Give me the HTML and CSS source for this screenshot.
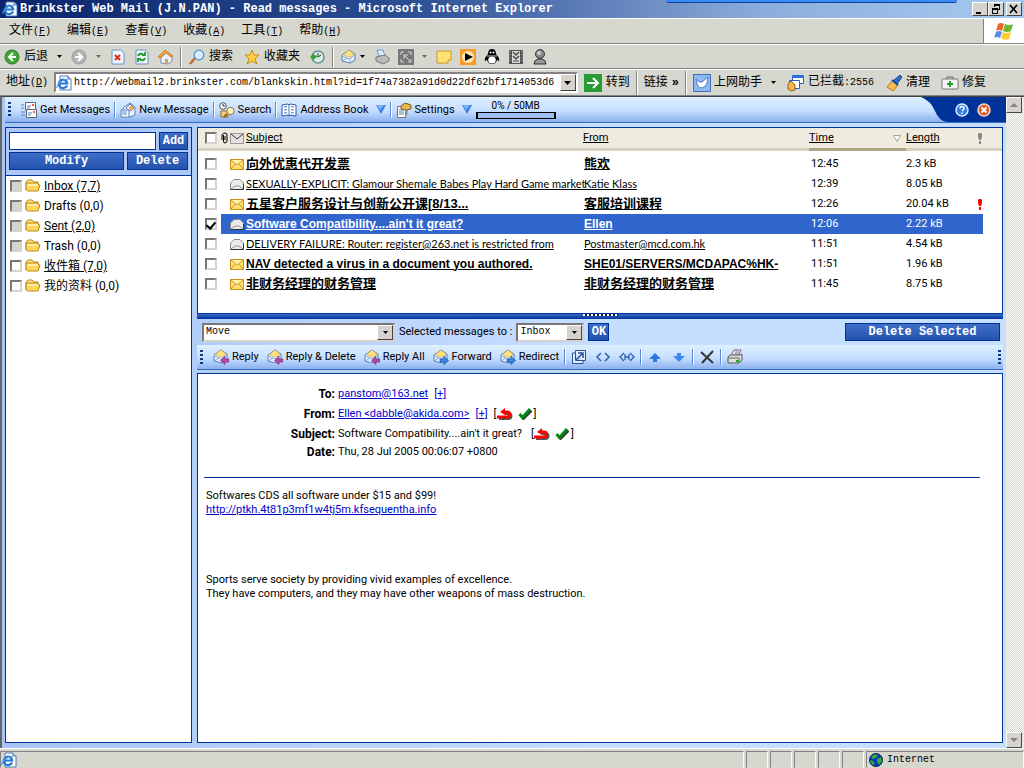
FILE: index.html
```html
<!DOCTYPE html>
<html lang="zh-CN">
<head>
    <meta charset="UTF-8">
    <meta name="viewport" content="width=device-width, initial-scale=1.0">
    <title>Brinkster Web Mail (J.N.PAN) - Read messages</title>
    <link rel="stylesheet" href="styles.css">
</head>
<body>
    <!-- shared icons -->
    <svg class="sprite" aria-hidden="true">
        <symbol id="i-ie" viewBox="0 0 16 16">
            <path d="M4 1h8l3 3v11H4z" fill="#fff" stroke="#5578b8"/>
            <path d="M12 1v3h3" fill="#cde" stroke="#5578b8"/>
            <path d="M11 10.500a4.200 4.200 0 1 1 .3-2H3.500" fill="none" stroke="#2277d0" stroke-width="2.200"/>
            <path d="M1 13C0 9 7 4 12 4" fill="none" stroke="#4c9be8" stroke-width="1.200"/>
        </symbol>
        <symbol id="i-caret" viewBox="0 0 5 3"><path d="M0 0h5L2.500 3z"/></symbol>
        <symbol id="i-tri" viewBox="0 0 10 9"><path d="M0 0h10L5 9z" fill="#3c7ee8"/><path d="M1 0h7L4 5z" fill="#7eb2f8"/></symbol>
        <symbol id="i-mail" viewBox="0 0 16 16">
            <path d="M1 6l7-5 6 4v6l-5 3-8-2z" fill="#e8f2ff" stroke="#5a80bd"/>
            <path d="M3 5l5-4 5 4-3 3-6-1z" fill="#ffe27a" stroke="#c9a23c" stroke-width=".6"/>
            <path d="M1 7l7 3 6-4M1 12l5-3m3 5V9" fill="none" stroke="#7a9cd0" stroke-width=".8"/>
        </symbol>
        <symbol id="i-reply" viewBox="0 0 16 16">
            <use href="#i-mail"/>
            <path d="M16 10h-4V7.500L7.500 11.500l4.500 4V13h4z" fill="#b04ca8" stroke="#7c2a80" stroke-width=".7"/>
        </symbol>
        <symbol id="i-forward" viewBox="0 0 16 16">
            <use href="#i-mail"/>
            <path d="M7 10h4V7.500l4.500 4-4.500 4V13H7z" fill="#3c86e8" stroke="#1b4fa0" stroke-width=".7"/>
        </symbol>
        <symbol id="i-folder" viewBox="0 0 16 14">
            <path d="M1 11V3l2-2h4l2 2h4v3" fill="#ffe48a" stroke="#b98a1a"/>
            <path d="M1 4h12v2h2l-2 6H3l-2-1z" fill="#ffd75a" stroke="#b98a1a"/>
            <path d="M3 6h10" stroke="#fff6c8" stroke-width="1.500"/>
        </symbol>
        <symbol id="i-closed" viewBox="0 0 14 11">
            <path d="M.5.5h13v10H.5z" fill="#ffdf70" stroke="#c98f1c"/>
            <path d="M1 1l6 5 6-5M1 10l4-5m8 5L9 5" fill="none" stroke="#d09a2c"/>
            <path d="M2 1h10L7 5z" fill="#fff2ae"/>
        </symbol>
        <symbol id="i-open" viewBox="0 0 14 11">
            <path d="M.5 10.500V4L4 .5h6L13.500 4v6.500z" fill="#eceaec" stroke="#888"/>
            <path d="M1 10l4-3h4l4 3" fill="none" stroke="#999"/>
            <path d="M.5 10.500h13V5" fill="none" stroke="#333"/>
        </symbol>
        <symbol id="i-spam" viewBox="0 0 16 12">
            <path d="M1 9.500h9c4 0 4-5 0-5H7" fill="none" stroke="#555" stroke-width="3" transform="translate(1 1)"/>
            <path d="M0 9h10c3.500 0 3.500-5 0-5H6" fill="none" stroke="#f00" stroke-width="3"/>
            <path d="M3 4l5-4v7z" fill="#f00"/>
        </symbol>
        <symbol id="i-ok" viewBox="0 0 14 12">
            <path d="M2 7l3 3 8-8" fill="none" stroke="#333" stroke-width="2.500" transform="translate(.6 .6)"/>
            <path d="M1.500 6l3 3.500L12 1" fill="none" stroke="#008a10" stroke-width="2.800"/>
        </symbol>
        <symbol id="i-printer" viewBox="0 0 16 16">
            <path d="M4 7l3-6h7l-3 6z" fill="#fff" stroke="#668"/>
            <path d="M1 8l2-2h10l2-1v6l-3 3H1z" fill="#ddd" stroke="#555"/>
            <path d="M1 9h11v5M8 3h4M7 5h4" fill="none" stroke="#666"/>
            <path d="M9 11h3v2H9z" fill="#2a2"/>
        </symbol>
    </svg>

    <header class="titlebar">
        <svg class="ico"><use href="#i-ie"/></svg>
        <h1>Brinkster Web Mail (J.N.PAN) - Read messages - Microsoft Internet Explorer</h1>
        <span class="behind"></span>
        <div class="win-buttons">
            <button type="button" aria-label="Minimize"><svg viewBox="0 0 12 10"><path d="M2 8h5v2H2z"/></svg></button>
            <button type="button" aria-label="Restore"><svg viewBox="0 0 12 10"><path d="M4 0h6v6H8V5h1V2H5v1H4zM2 4h6v6H2zM3 6v3h4V6z" fill-rule="evenodd"/></svg></button>
            <button type="button" class="close" aria-label="Close"><svg viewBox="0 0 12 10"><path d="M2 1l7 8M9 1L2 9" stroke="#000" stroke-width="1.700"/></svg></button>
        </div>
    </header>

    <nav class="menubar">
        <button type="button">文件<small>(<u>F</u>)</small></button>
        <button type="button">编辑<small>(<u>E</u>)</small></button>
        <button type="button">查看<small>(<u>V</u>)</small></button>
        <button type="button">收藏<small>(<u>A</u>)</small></button>
        <button type="button">工具<small>(<u>T</u>)</small></button>
        <button type="button">帮助<small>(<u>H</u>)</small></button>
        <span class="flag">
            <svg viewBox="0 0 20 18">
                <path d="M4 2q3-2 6 0L8 9q-3-2-6 0z" fill="#f0642c"/>
                <path d="M11 2q4 2 8 0l-2 7q-4 2-8 0z" fill="#6cb82e"/>
                <path d="M2 10q3-2 6 0l-2 6q-3-2-6 0z" fill="#4f8fe8"/>
                <path d="M9 10q4 2 8 0l-2 7q-4 2-8-1z" fill="#ffc928"/>
            </svg>
        </span>
    </nav>

    <div class="ie-tools">
        <button type="button"><svg class="ico" viewBox="0 0 16 16"><circle cx="8" cy="8" r="7" fill="#3fa535" stroke="#277a22"/><path d="M12 8H5m4-4L5 8l4 4" fill="none" stroke="#fff" stroke-width="2"/></svg>后退</button>
        <svg class="caret"><use href="#i-caret"/></svg>
        <button type="button" aria-label="前进"><svg class="ico" viewBox="0 0 16 16"><circle cx="8" cy="8" r="7" fill="#b4b4b4" stroke="#999"/><path d="M4 8h7M7 4l4 4-4 4" fill="none" stroke="#fff" stroke-width="2"/></svg></button>
        <svg class="caret dim"><use href="#i-caret"/></svg>
        <button type="button" class="wide" aria-label="停止"><svg class="ico" viewBox="0 0 16 16"><path d="M2 1h9l3 3v11H2z" fill="#eef5ff" stroke="#6c93cf"/><path d="M5 6l5 5m0-5l-5 5" stroke="#e02a18" stroke-width="2"/></svg></button>
        <button type="button" class="wide" aria-label="刷新"><svg class="ico" viewBox="0 0 16 16"><path d="M2 1h9l3 3v11H2z" fill="#eef5ff" stroke="#6c93cf"/><path d="M4 7q1-3 5-2m2-2v3H8m3 3q-1 3-5 2m-2 2v-3h3" fill="none" stroke="#1c9a2c" stroke-width="1.800"/></svg></button>
        <button type="button" class="wide" aria-label="主页"><svg class="ico" viewBox="0 0 16 16"><path d="M3 8v6l7 1 4-3V7l-5-4z" fill="#e9f0fb" stroke="#7790b5"/><path d="M0 8l7-7 8 6-2 1-5-4-6 5z" fill="#f2a33a" stroke="#b86c1a" stroke-width=".7"/><path d="M7 10h3v5H7z" fill="#d99b58"/></svg></button>
        <i class="sep"></i>
        <button type="button"><svg class="ico" viewBox="0 0 16 16"><path d="M1 15l5-6" stroke="#b8733c" stroke-width="2.500"/><circle cx="10" cy="6" r="4.800" fill="#d6efff" stroke="#5a92c8" stroke-width="1.300"/></svg><span>搜索</span></button>
        <button type="button" class="fav"><svg class="ico" viewBox="0 0 16 16"><path d="M8 1l2 5h5l-4 4 2 5-5-3-5 3 2-5-4-4h5z" fill="#ffd044" stroke="#c78e14"/></svg><span>收藏夹</span></button>
        <button type="button" aria-label="历史"><svg class="ico" viewBox="0 0 16 16"><circle cx="9" cy="8" r="6" fill="#d8ece8" stroke="#6a8f96" stroke-width="1.500"/><path d="M9 4v4l3-2" fill="none" stroke="#333"/><path d="M1 8l4-4v2q3 0 4 2-3 0-4 3z" fill="#33a52c"/></svg></button>
        <i class="sep"></i>
        <button type="button" aria-label="邮件"><svg class="ico"><use href="#i-mail"/></svg></button>
        <svg class="caret near"><use href="#i-caret"/></svg>
        <button type="button" class="wide" aria-label="打印"><svg class="ico" viewBox="0 0 16 16"><path d="M3 1h6l2 6H5z" fill="#dcecff" stroke="#6b97d2"/><path d="M2 8l9-2 4 3v3l-6 3-7-3z" fill="#bbb" stroke="#777"/></svg></button>
        <button type="button" class="wide" aria-label="全屏"><svg class="ico" viewBox="0 0 16 16"><path d="M0 0h16v16H0z" fill="#777"/><path d="M3 6V3h3M13 6V3h-3M3 10v3h3m7-3v3h-3M6 10V6h4M6 6l6 6" fill="none" stroke="#ddd"/></svg></button>
        <svg class="caret dim"><use href="#i-caret"/></svg>
        <button type="button" class="wide" aria-label="便笺"><svg class="ico" viewBox="0 0 16 16"><path d="M1 2h14v9l-3 3H1z" fill="#ffe071" stroke="#c49a28"/><path d="M15 11h-3v3" fill="#fff3b5" stroke="#c49a28"/></svg></button>
        <button type="button" class="wide" aria-label="媒体"><svg class="ico" viewBox="0 0 16 16"><path d="M0 0h16v16H0z" fill="#f79b2c"/><circle cx="8" cy="8" r="6" fill="#ffe9b8"/><path d="M5 4l8 4-8 4z"/></svg></button>
        <button type="button" class="wide" aria-label="QQ"><svg class="ico" viewBox="0 0 16 16"><path d="M4 5q0-5 4-5t4 5q4 4 3 7l-2-1q-1 4-5 4t-5-4l-2 1q-1-3 3-7z"/><ellipse cx="8" cy="11" rx="3.800" ry="3.500" fill="#fff"/><circle cx="6.500" cy="3.500" r="1" fill="#fff"/><circle cx="9.500" cy="3.500" r="1" fill="#fff"/><path d="M3 7h10" stroke="#888" stroke-width="1.500"/></svg></button>
        <button type="button" class="wide" aria-label="下载"><svg class="ico" viewBox="0 0 16 16"><path d="M1 1h14v14H1z" fill="#555"/><path d="M4 2h8v12H4z" fill="#ddd"/><path d="M2 2v12M14 2v12" stroke="#bbb" stroke-dasharray="1 2"/><path d="M5 3l3 3 3-3M5 7l3 3 3-3" fill="none" stroke="#444" stroke-width="1.500"/><path d="M5 12h6" stroke="#444"/></svg></button>
        <button type="button" class="wide" aria-label="联系人"><svg class="ico" viewBox="0 0 16 16"><circle cx="8" cy="5" r="4.500" fill="#888" stroke="#333"/><path d="M2 15q0-4 4-5h4q4 1 4 5z" fill="#999" stroke="#333"/><circle cx="7" cy="4" r="2" fill="#ccc"/></svg></button>
    </div>

    <form class="address">
        <label for="url">地址<small>(<u>D</u>)</small></label>
        <div class="url-box">
            <svg class="ico"><use href="#i-ie"/></svg>
            <input type="text" id="url" value="http://webmail2.brinkster.com/blankskin.html?id=1f74a7382a91d0d22df62bf1714053d6">
            <button type="button" class="drop" aria-label="展开"><svg viewBox="0 0 7 4"><path d="M0 0h7L3.500 4z"/></svg></button>
        </div>
        <button type="button" class="go"><svg viewBox="0 0 18 18"><path d="M0 0h18v18H0z" fill="#279b35"/><path d="M3 9h10M9 4l5 5-5 5" fill="none" stroke="#fff" stroke-width="2"/></svg>转到</button>
        <i class="sep"></i>
        <a href="#" class="links">链接 <b>»</b></a>
        <i class="sep"></i>
        <button type="button" class="helper"><svg viewBox="0 0 18 18"><path d="M.5.5h17v17H.5z" fill="#8eb8f0" stroke="#3d70bd"/><path d="M3 5q3 4 6 3l6-5q0 9-6 11-5 0-6-9z" fill="#fff" stroke="#4a7ac2"/></svg>上网助手<svg class="caret"><use href="#i-caret"/></svg></button>
        <button type="button" class="helper"><svg viewBox="0 0 18 18"><path d="M5.500 1.500h11v8h-11z" fill="#fff" stroke="#2a5fc4"/><path d="M5 1h12v3H5z" fill="#2a6fe0"/><path d="M2.500 6.500h10v8h-10z" fill="#fff" stroke="#2a5fc4"/><path d="M1 10l3-3 4 4v5l-4 1-3-2z" fill="#f3b555" stroke="#9b5d18"/></svg><span>已拦截<small>:2556</small></span></button>
        <button type="button" class="helper"><svg viewBox="0 0 18 18"><path d="M15 1l2 2-5 7-4-3z" fill="#2d6fd0" stroke="#174690"/><path d="M8 6l5 5-5 6-6-4z" fill="#f4bd54" stroke="#b7761e"/><path d="M7 6l6 5" stroke="#174690" stroke-width="2"/></svg>清理</button>
        <button type="button" class="helper"><svg viewBox="0 0 18 18"><path d="M6 5V3h6v2" fill="none" stroke="#666"/><rect x="1" y="5" width="16" height="10" rx="1" fill="#f4f4f4" stroke="#777"/><path d="M9 7v6M6 10h6" stroke="#22a12c" stroke-width="2"/></svg>修复</button>
    </form>

    <div class="viewport">
        <div class="page">
            <nav class="mail-tools">
                <i class="dots"></i>
                <a href="#"><svg class="ico" viewBox="0 0 16 16"><path d="M4.500.5h10v8h-10z" fill="#fff" stroke="#667"/><path d="M6 4h4M6 6h3M0 3h3M0 6h3" stroke="#58c"/><path d="M11 2h2v2h-2z" fill="#e64"/><path d="M5.500 7.500h10v8h-10z" fill="#fff" stroke="#667"/><path d="M7 11h4m-4 2h3M0 10h4M0 13h4" stroke="#58c"/><path d="M12 9h2v2h-2z" fill="#e64"/></svg>Get Messages</a>
                <i class="sep"></i>
                <a href="#"><svg class="ico" viewBox="0 0 16 16"><path d="M3 6l7-5 5 4v8l-5 2-7-2z" fill="#e8f2ff" stroke="#5a80bd"/><path d="M6 6l4-4 4 4-4 3z" fill="#fff" stroke="#5a80bd"/><circle cx="11" cy="6" r="2" fill="#f2a33a"/><path d="M1 8h8v7H1z" fill="#fff" stroke="#5a80bd"/><path d="M2 10h5m-5 2h5" stroke="#58c"/></svg>New Message</a>
                <i class="sep"></i>
                <a href="#"><svg class="ico" viewBox="0 0 16 16"><circle cx="4" cy="4" r="3.300" fill="#fff" stroke="#555"/><path d="M4 2v2h2" fill="none" stroke="#333"/><path d="M2 9h7v6H2z" fill="#f6cf70" stroke="#96701e"/><circle cx="11.500" cy="9" r="3.700" fill="#fff3c4" stroke="#8a7440"/><path d="M8 12l-3 3" stroke="#8a6020" stroke-width="2"/></svg>Search</a>
                <i class="sep"></i>
                <a href="#"><svg class="ico" viewBox="0 0 16 16"><path d="M1 3l6-1 1 1 1-1 6 1v11l-6-1-1 1-1-1-6 1z" fill="#fff" stroke="#2f5da8"/><path d="M8 3v10M3 5l3-.5M3 8l3-.5M3 11l3-.5M10 4.500l3 .5m-3 2.500l3 .5m-3 2.500l3 .5" stroke="#4b7cc8"/></svg>Address Book<svg class="tri"><use href="#i-tri"/></svg></a>
                <i class="sep"></i>
                <a href="#"><svg class="ico" viewBox="0 0 16 16"><path d="M1.500 4.500h8v11h-8z" fill="#fff" stroke="#777"/><path d="M3 8h5m-5 2h5m-5 2h5" stroke="#58a"/><path d="M5 4l4-3 6 2v4l-5 1-5-1z" fill="#e8b64a" stroke="#7e5a16"/><path d="M9 7h3l-1 6H9z" fill="#888"/></svg>Settings<svg class="tri"><use href="#i-tri"/></svg></a>
                <div class="quota">0% / 50MB<meter min="0" max="50" value="0" aria-label="Quota used"></meter></div>
                <div class="corner">
                    <svg class="curve" viewBox="0 0 26 25" preserveAspectRatio="none"><path d="M0 0h26v25Q18 24 14 14T0 0z" fill="#039"/></svg>
                    <a href="#" aria-label="Help"><svg viewBox="0 0 14 14"><circle cx="7" cy="7" r="6" fill="#3a7de0" stroke="#dcebff" stroke-width="1.500"/><path d="M5 5.500q0-2 2-2t2 1.800Q9 6.500 7 8m0 1.500V11" fill="none" stroke="#fff" stroke-width="1.500"/></svg></a>
                    <a href="#" aria-label="Log out"><svg viewBox="0 0 14 14"><circle cx="7" cy="7" r="6" fill="#dd5a2c" stroke="#ffd8c4" stroke-width="1.500"/><path d="M4.500 4.500l5 5m0-5l-5 5" stroke="#fff" stroke-width="1.800"/></svg></a>
                </div>
            </nav>

            <div class="columns">
                <aside class="folders">
                    <form class="folder-form">
                        <input type="text" aria-label="Folder name">
                        <button type="button" class="btn add">Add</button>
                        <button type="button" class="btn modify">Modify</button>
                        <button type="button" class="btn delete">Delete</button>
                    </form>
                    <ul>
                        <li><input type="checkbox" disabled aria-label="Inbox"><svg><use href="#i-folder"/></svg><a href="#">Inbox (7,7)</a></li>
                        <li><input type="checkbox" disabled aria-label="Drafts"><svg><use href="#i-folder"/></svg><a href="#" class="plain">Drafts (0,0)</a></li>
                        <li><input type="checkbox" disabled aria-label="Sent"><svg><use href="#i-folder"/></svg><a href="#">Sent (2,0)</a></li>
                        <li><input type="checkbox" disabled aria-label="Trash"><svg><use href="#i-folder"/></svg><a href="#" class="plain">Trash (0,0)</a></li>
                        <li><input type="checkbox" aria-label="收件箱"><svg><use href="#i-folder"/></svg><a href="#">收件箱 (7,0)</a></li>
                        <li><input type="checkbox" aria-label="我的资料"><svg><use href="#i-folder"/></svg><a href="#" class="plain">我的资料 (0,0)</a></li>
                    </ul>
                </aside>

                <main class="content">
                    <section class="list">
                        <table>
                            <colgroup>
                                <col class="c-check"><col class="c-icon"><col><col class="c-from"><col class="c-time"><col class="c-length"><col class="c-flag"><col class="c-end">
                            </colgroup>
                            <thead>
                                <tr>
                                    <th><input type="checkbox" aria-label="Select all"></th>
                                    <th><span class="head-icons">
                                        <svg class="clip" viewBox="0 0 8 12"><path d="M2.500 3v6q0 2 1.500 2t2-2V3q0-2-2-2T1 3v5M4 4v4" fill="none" stroke="#000"/></svg>
                                        <svg class="env" viewBox="0 0 14 11"><path d="M.5.5h13v10H.5z" fill="#e4e0e0" stroke="#999"/><path d="M1 1l6 5 6-5" fill="none" stroke="#333"/></svg>
                                    </span></th>
                                    <th><a href="#">Subject</a></th>
                                    <th><a href="#">From</a></th>
                                    <th class="sorted"><span><a href="#">Time</a><svg viewBox="0 0 8 7"><path d="M.5.5h7L4 6.500z" fill="#fff" stroke="#aca899"/></svg></span></th>
                                    <th><a href="#">Length</a></th>
                                    <th><svg class="bang" viewBox="0 0 4 11"><path d="M0 1l1-1h2l1 1v3L3 7H1L0 4zM1 8h2v3H1z" fill="#888"/></svg></th>
                                    <th></th>
                                </tr>
                            </thead>
                            <tbody>
                                <tr class="unread cjk"><td><input type="checkbox" aria-label="Select message"></td><td><svg class="env"><use href="#i-closed"/></svg></td><td><a href="#">向外优惠代开发票</a></td><td><a href="#">熊欢</a></td><td>12:45</td><td>2.3 kB</td><td></td><td class="end"></td></tr>
                                <tr class="read"><td><input type="checkbox" aria-label="Select message"></td><td><svg class="env"><use href="#i-open"/></svg></td><td><a href="#">SEXUALLY-EXPLICIT: Glamour Shemale Babes Play Hard Game market</a></td><td><a href="#">Katie Klass</a></td><td>12:39</td><td>8.05 kB</td><td></td><td class="end"></td></tr>
                                <tr class="unread cjk"><td><input type="checkbox" aria-label="Select message"></td><td><svg class="env"><use href="#i-closed"/></svg></td><td><a href="#">五星客户服务设计与创新公开课[8/13...</a></td><td><a href="#">客服培训课程</a></td><td>12:26</td><td>20.04 kB</td><td><svg class="bang" viewBox="0 0 4 11"><path d="M0 1l1-1h2l1 1v3L3 7H1L0 4zM1 8h2v3H1z" fill="#f00"/></svg></td><td class="end"></td></tr>
                                <tr class="unread selected"><td><input type="checkbox" checked aria-label="Select message"></td><td><svg class="env"><use href="#i-open"/></svg></td><td><a href="#">Software Compatibility....ain't it great?</a></td><td><a href="#">Ellen</a></td><td>12:06</td><td>2.22 kB</td><td></td><td class="end"></td></tr>
                                <tr class="read"><td><input type="checkbox" aria-label="Select message"></td><td><svg class="env"><use href="#i-open"/></svg></td><td><a href="#">DELIVERY FAILURE: Router: register@263.net is restricted from</a></td><td><a href="#">Postmaster@mcd.com.hk</a></td><td>11:51</td><td>4.54 kB</td><td></td><td class="end"></td></tr>
                                <tr class="unread"><td><input type="checkbox" aria-label="Select message"></td><td><svg class="env"><use href="#i-closed"/></svg></td><td><a href="#">NAV detected a virus in a document you authored.</a></td><td><a href="#">SHE01/SERVERS/MCDAPAC%HK-</a></td><td>11:51</td><td>1.96 kB</td><td></td><td class="end"></td></tr>
                                <tr class="unread cjk"><td><input type="checkbox" aria-label="Select message"></td><td><svg class="env"><use href="#i-closed"/></svg></td><td><a href="#">非财务经理的财务管理</a></td><td><a href="#">非财务经理的财务管理</a></td><td>11:45</td><td>8.75 kB</td><td></td><td class="end"></td></tr>
                            </tbody>
                        </table>
                    </section>

                    <div class="splitter"><i></i></div>

                    <form class="actions">
                        <span class="select wide"><select id="action" aria-label="Action"><option>Move</option><option>Copy</option></select><i><svg><use href="#i-caret"/></svg></i></span>
                        <label for="target">Selected messages to :</label>
                        <span class="select"><select id="target"><option>Inbox</option><option>Drafts</option></select><i><svg><use href="#i-caret"/></svg></i></span>
                        <button type="button" class="btn ok">OK</button>
                        <button type="button" class="btn delete-selected">Delete Selected</button>
                    </form>

                    <nav class="mail-tools message-tools">
                        <i class="dots"></i>
                        <a href="#"><svg class="ico"><use href="#i-reply"/></svg>Reply</a>
                        <a href="#"><svg class="ico"><use href="#i-reply"/></svg>Reply &amp; Delete</a>
                        <a href="#"><svg class="ico"><use href="#i-reply"/></svg>Reply All</a>
                        <a href="#"><svg class="ico"><use href="#i-forward"/></svg>Forward</a>
                        <a href="#"><svg class="ico"><use href="#i-forward"/></svg>Redirect</a>
                        <i class="sep"></i>
                        <a href="#" aria-label="Open in new window"><svg class="ico" viewBox="0 0 16 16"><path d="M4.500 1.500h10v10h-10zM4 4H1.500v10.500H12V12" fill="#e6f1ff" stroke="#27509a"/><path d="M5 11l7-7M7 4h5v5" fill="none" stroke="#27509a" stroke-width="1.500"/></svg></a>
                        <a href="#" aria-label="Source"><svg class="ico" viewBox="0 0 16 16"><path d="M6 4L2 8l4 4m4-8l4 4-4 4" fill="none" stroke="#2a5cb0" stroke-width="1.500"/></svg></a>
                        <a href="#" aria-label="Headers"><svg class="ico" viewBox="0 0 16 16"><path d="M5 4L1 8l4 4m6-8l4 4-4 4M6 5v6m4-6v6M6 8h4" fill="none" stroke="#2a5cb0" stroke-width="1.300"/></svg></a>
                        <i class="sep"></i>
                        <a href="#" aria-label="Previous"><svg class="ico" viewBox="0 0 16 16"><path d="M8 4l6 6h-4v3H6v-3H2z" fill="#2f78e0"/></svg></a>
                        <a href="#" aria-label="Next"><svg class="ico" viewBox="0 0 16 16"><path d="M8 13l6-6h-4V4H6v3H2z" fill="#3f8af0"/></svg></a>
                        <i class="sep"></i>
                        <a href="#" aria-label="Delete"><svg class="ico" viewBox="0 0 16 16"><path d="M2 3l12 11M14 2L3 14" stroke="#333" stroke-width="2"/></svg></a>
                        <i class="sep"></i>
                        <a href="#" aria-label="Print"><svg class="ico"><use href="#i-printer"/></svg></a>
                        <i class="dots last"></i>
                    </nav>

                    <article class="message">
                        <dl>
                            <dt>To:</dt>
                            <dd><a href="#">panstom@163.net</a> <a href="#">[+]</a></dd>
                            <dt>From:</dt>
                            <dd><a href="#">Ellen &lt;dabble@akida.com&gt;</a> <a href="#">[+]</a> <span>[<svg class="spam"><use href="#i-spam"/></svg><svg class="good"><use href="#i-ok"/></svg>]</span></dd>
                            <dt>Subject:</dt>
                            <dd>Software Compatibility....ain't it great? <span class="marks">[<svg class="spam"><use href="#i-spam"/></svg><svg class="good"><use href="#i-ok"/></svg>]</span></dd>
                            <dt>Date:</dt>
                            <dd>Thu, 28 Jul 2005 00:06:07 +0800</dd>
                        </dl>
                        <hr>
                        <div class="text">
                            <p>Softwares CDS all software under $15 and $99!<br><a href="#">http://ptkh.4t81p3mf1w4tj5m.kfsequentha.info</a></p>
                            <p>Sports serve society by providing vivid examples of excellence.<br>They have computers, and they may have other weapons of mass destruction.</p>
                        </div>
                    </article>
                </main>
            </div>
        </div>

        <div class="scrollbar">
            <button type="button" aria-label="Scroll up"><svg viewBox="0 0 8 4"><path d="M4 0l4 4H0z" fill="#848284"/></svg></button>
            <button type="button" aria-label="Scroll down"><svg viewBox="0 0 8 4"><path d="M0 0h8L4 4z" fill="#848284"/></svg></button>
        </div>
    </div>

    <footer class="status">
        <div class="main-pane"><svg class="ico"><use href="#i-ie"/></svg></div>
        <div class="pane"></div><div class="pane"></div><div class="pane"></div><div class="pane"></div><div class="pane"></div>
        <div class="zone"><svg viewBox="0 0 14 14"><circle cx="7" cy="7" r="6.500" fill="#0a36c8" stroke="#124"/><path d="M2 4q3-4 7-2L7 5 4 6zM8 6l4-2 1 4-3 4-2-3zM1 7l3 1 2 3-2 1q-3-2-3-5z" fill="#2fae2f"/></svg>Internet</div>
    </footer>
</body>
</html>
```
FILE: styles.css
```css
* {
    box-sizing: border-box;
}
body {
    margin: 0;
    height: 100vh;
    display: flex;
    flex-direction: column;
    overflow: hidden;
    background: #d6d7ce;
    color: #000;
    font-family: Roboto, "Noto Sans CJK SC", sans-serif;
    font-size: 11px;
    line-height: 14px;
}
svg {
    flex: none;
    display: block;
}
button {
    font: inherit;
    color: inherit;
    background: none;
    border: none;
    padding: 0;
}
small {
    font-size: 10px;
}
.sprite {
    position: absolute;
    width: 0;
    height: 0;
}
.ico {
    width: 16px;
    height: 16px;
}
.caret {
    width: 5px;
    height: 3px;
}
.dim {
    opacity: 0.5;
}

/* title bar */
.titlebar {
    position: relative;
    display: flex;
    align-items: center;
    gap: 2px;
    height: 18px;
    padding: 0 2px;
    background: linear-gradient(90deg, #0a246a, #2b4f94 40%, #8faddc 75%, #a6caf0);
}
.titlebar h1 {
    flex: 1;
    margin: 0;
    color: #fff;
    font: bold 12px/16px "Liberation Mono", monospace;
    white-space: nowrap;
}
.behind {
    position: absolute;
    top: 0;
    left: 65%;
    right: 67px;
    height: 3px;
    background: #3a8df0;
    border-bottom: 1px solid #0b3fa8;
    border-radius: 0 0 4px 4px;
}
.win-buttons {
    display: flex;
}
.win-buttons button {
    width: 16px;
    height: 14px;
    padding: 1px;
    background: #d6d3ce;
    border: 1px solid;
    border-color: #fff #444 #444 #fff;
}
.win-buttons svg {
    width: 12px;
    height: 10px;
}
.win-buttons .close {
    margin-left: 2px;
}

/* browser menus and buttons */
.menubar,
.ie-tools,
.address {
    display: flex;
    align-items: center;
    border-top: 1px solid #fff;
    border-bottom: 1px solid #848284;
    font: 12px/16px "Liberation Mono", "Noto Sans CJK SC", monospace;
}
.menubar {
    height: 26px;
    padding-left: 9px;
    gap: 16px;
}
.flag {
    display: flex;
    align-items: center;
    justify-content: center;
    align-self: stretch;
    width: 41px;
    margin-left: auto;
    background: #fff;
    border-left: 1px solid #848284;
}
.flag svg {
    width: 20px;
    height: 18px;
}
.ie-tools {
    height: 25px;
    padding-left: 4px;
    gap: 9px;
}
.ie-tools button,
.address button {
    display: flex;
    align-items: center;
    gap: 4px;
}
.ie-tools .wide {
    width: 15px;
}
.ie-tools .near {
    margin-left: -6px;
}
.ie-tools .fav {
    margin-left: 2px;
}
.sep {
    width: 2px;
    height: 18px;
    border-left: 1px solid #848284;
    border-right: 1px solid #fff;
}
.ie-tools .sep {
    margin: 0 -2px;
    height: 20px;
}
.address {
    height: 27px;
    padding: 0 33px 0 6px;
    gap: 6px;
    white-space: nowrap;
}
.address .sep {
    height: 24px;
}
.url-box {
    display: flex;
    align-items: center;
    flex: 1;
    min-width: 0;
    height: 21px;
    background: #fff;
    border: 2px solid;
    border-color: #848284 #fff #fff #848284;
    gap: 2px;
}
.url-box input {
    flex: 1;
    min-width: 0;
    padding: 0;
    border: none;
    background: none;
    font: 10px/14px "Liberation Mono", monospace;
}
.address .drop,
.select i {
    display: flex;
    align-items: center;
    justify-content: center;
    width: 16px;
    height: 17px;
    background: #d6d3ce;
    border: 1px solid;
    border-color: #fff #444 #444 #fff;
}
.drop svg {
    width: 7px;
    height: 4px;
}
.go svg,
.helper svg:first-child {
    width: 18px;
    height: 18px;
}
.links {
    display: flex;
    gap: 4px;
    color: #000;
    text-decoration: none;
}
.address .helper {
    gap: 3px;
    margin-right: 5px;
}
.helper .caret {
    margin-left: 6px;
}

/* web page area */
.viewport {
    display: flex;
    flex: 1;
    min-height: 0;
    border-top: 1px solid #444;
    border-left: 2px solid #666;
}
.page {
    display: flex;
    flex-direction: column;
    flex: 1;
    min-width: 0;
    padding: 0 0 5px 3px;
    background: linear-gradient(90deg, #a8c5f5, #c6deff 60%);
}
.mail-tools {
    display: flex;
    align-items: center;
    gap: 4px;
    height: 26px;
    padding-left: 3px;
    background: linear-gradient(#ddf0ff, #c6deff 55%, #8bb0ee);
    border-bottom: 1px solid #3a6dbd;
    white-space: nowrap;
}
.mail-tools a {
    display: flex;
    align-items: center;
    gap: 3px;
    color: #000;
    text-decoration: none;
}
.mail-tools .sep {
    border-left-color: #5b8ad8;
    height: 16px;
}
.dots {
    width: 3px;
    height: 15px;
    margin-right: 6px;
    background: repeating-linear-gradient(#123a80 0 2px, transparent 2px 4px);
}
.tri {
    width: 10px;
    height: 9px;
    margin-left: 4px;
}
.quota {
    width: 80px;
    font-size: 10px;
    line-height: 12px;
    text-align: center;
}
.quota meter {
    appearance: none;
    display: block;
    width: 100%;
    height: 7px;
    border: 1px solid #000;
    border-width: 1px 2px;
    background: #9fbdf2;
}
.quota meter::-webkit-meter-bar {
    display: none;
}
.corner {
    display: flex;
    align-items: center;
    align-self: stretch;
    gap: 8px;
    margin-left: auto;
    padding-right: 15px;
    background: #039;
}
.corner .curve {
    width: 26px;
    height: 25px;
    background: linear-gradient(#ddf0ff, #c6deff 55%, #8bb0ee);
}
.corner a svg {
    width: 14px;
    height: 14px;
}
.columns {
    display: flex;
    flex: 1;
    min-height: 0;
    gap: 5px;
    margin-top: 4px;
    padding-right: 3px;
}

/* folders */
.folders {
    width: 187px;
    background: #fff;
    border: 1px solid #039;
}
.folder-form {
    display: flex;
    flex-wrap: wrap;
    align-content: flex-start;
    gap: 2px 3px;
    padding: 4px 3px;
    height: 48px;
    background: #adc8f7;
    border-bottom: 1px solid #039;
}
.folder-form input {
    flex: 1 0 140px;
    min-width: 0;
    height: 18px;
    background: #fff;
    border: 1px solid #039;
}
.btn {
    height: 18px;
    padding: 0;
    background: linear-gradient(#3f6ec8, #2453ae);
    border: 1px solid #039;
    color: #fff;
    font: bold 12px/14px "Liberation Mono", monospace;
}
.add {
    width: 29px;
}
.modify {
    flex: 1;
}
.delete {
    width: 61px;
}
.folders ul {
    margin: 0;
    padding: 0 4px;
    list-style: none;
}
.folders li {
    display: flex;
    align-items: center;
    gap: 3px;
    height: 20px;
}
.folders li svg {
    width: 16px;
    height: 14px;
}
.folders a {
    color: #000;
    font-size: 12px;
}
.folders .plain {
    text-decoration: none;
}
input[type="checkbox"] {
    appearance: none;
    flex: none;
    display: flex;
    justify-content: center;
    width: 12px;
    height: 12px;
    margin: 0;
    background: #fff;
    border: 2px solid;
    border-color: #777 #d6d3ce #d6d3ce #777;
}
input[type="checkbox"]:disabled {
    background: #d6d3ce;
}
input[type="checkbox"]:checked::after {
    content: "";
    width: 4px;
    height: 7px;
    border: solid #000;
    border-width: 0 2px 2px 0;
    transform: rotate(40deg);
}

/* message list */
.content {
    display: flex;
    flex-direction: column;
    flex: 1;
    min-width: 0;
}
.list {
    height: 187px;
    background: #fff;
    border: 1px solid #039;
}
table {
    width: 100%;
    table-layout: fixed;
    border-spacing: 0;
    white-space: nowrap;
}
.c-check { width: 23px; }
.c-icon { width: 25px; }
.c-from { width: 226px; }
.c-time { width: 97px; }
.c-length { width: 72px; }
.c-flag { width: 5px; }
.c-end { width: 19px; }
th,
td {
    height: 20px;
    padding: 0;
    text-align: left;
    font-weight: normal;
}
th {
    height: 23px;
    background: #efebde;
    border-bottom: 3px solid #d6cfbd;
}
th.sorted {
    border-bottom-color: #ada584;
}
th.sorted span {
    display: flex;
    align-items: center;
    justify-content: space-between;
    padding-right: 5px;
}
th.sorted svg {
    width: 8px;
    height: 7px;
}
tbody::before {
    content: "";
    display: block;
    height: 3px;
}
th:first-child,
td:first-child {
    padding-left: 7px;
}
td:nth-child(2) {
    padding-left: 9px;
}
td:nth-child(4) {
    padding-left: 1px;
}
td:nth-child(5) {
    padding-left: 2px;
}
table a {
    color: #000;
}
.read a {
    font-family: Lato, sans-serif;
}
.unread a {
    font: bold 12px/14px "Liberation Sans", "Noto Sans CJK SC", sans-serif;
}
.cjk a {
    font-size: 13px;
}
.head-icons {
    display: flex;
    align-items: center;
    gap: 1px;
}
.clip {
    width: 8px;
    height: 12px;
}
.env {
    width: 14px;
    height: 11px;
}
.bang {
    width: 4px;
    height: 11px;
}
.selected td {
    background: #3165ce;
    color: #fff;
}
.selected td:first-child,
.selected .end {
    background: none;
}
.selected a {
    color: #fff;
}
.splitter {
    display: flex;
    justify-content: center;
    height: 5px;
    background: linear-gradient(#3a6cc8, #039);
}
.splitter i {
    width: 35px;
    height: 2px;
    background: repeating-linear-gradient(90deg, #fff 0 2px, #123 2px 4px);
}

/* actions on the selected messages */
.actions {
    display: flex;
    align-items: center;
    gap: 4px;
    height: 26px;
    padding: 0 3px 0 5px;
}
.select {
    position: relative;
    width: 68px;
}
.select.wide {
    width: 193px;
}
.select select {
    appearance: none;
    display: block;
    width: 100%;
    height: 19px;
    padding: 0 2px;
    background: #fff;
    border: 2px solid;
    border-color: #777 #d6d3ce #d6d3ce #777;
    border-radius: 0;
    color: #000;
    font: 10px/14px "Liberation Mono", monospace;
}
.select i {
    position: absolute;
    top: 2px;
    right: 2px;
    height: 15px;
    pointer-events: none;
}
.select i svg {
    width: 5px;
    height: 3px;
}
.ok {
    width: 21px;
}
.delete-selected {
    width: 155px;
    margin-left: auto;
}
.message-tools {
    gap: 8px;
    height: 25px;
}
.message-tools .dots {
    margin-right: 2px;
}
.message-tools .sep {
    margin: 0 -3px;
}
.message-tools .last {
    margin-left: auto;
}

/* opened message */
.message {
    flex: 1;
    margin-top: 3px;
    padding: 10px 6px;
    background: #fff;
    border: 1px solid #039;
}
.message a {
    color: #00c;
}
.message dl {
    display: grid;
    grid-template-columns: 131px 1fr;
    gap: 0 3px;
    margin: 0;
    line-height: 20px;
}
.message dt {
    text-align: right;
    font-weight: bold;
    font-size: 12px;
}
.message dd {
    display: flex;
    gap: 6px;
    margin: 0;
}
.message dt:last-of-type,
.message dd:last-of-type {
    line-height: 16px;
}
.message dd span {
    display: flex;
    align-items: center;
}
.message .marks {
    margin-left: 3px;
}
.spam {
    width: 16px;
    height: 12px;
}
.good {
    width: 14px;
    height: 12px;
    margin: 0 2px 0 5px;
}
.message hr {
    margin: 17px 16px 11px 0;
    border: none;
    border-top: 1px solid #039;
}
.text {
    padding: 0 2px;
}
.text p {
    margin: 0 0 56px;
}

/* scroll bar and status bar */
.scrollbar {
    display: flex;
    flex-direction: column;
    justify-content: space-between;
    width: 18px;
    padding-right: 2px;
    background: repeating-conic-gradient(#fff 0 25%, #d6d3ce 0 50%) 0 0 / 2px 2px;
}
.scrollbar button {
    display: flex;
    align-items: center;
    justify-content: center;
    width: 16px;
    height: 16px;
    background: #d6d3ce;
    border: 1px solid;
    border-color: #fff #444 #444 #fff;
}
.scrollbar svg {
    width: 8px;
    height: 4px;
}
.status {
    display: flex;
    gap: 2px;
    height: 20px;
    padding-top: 2px;
    border-top: 1px solid #fff;
    font: 10px/16px "Liberation Mono", monospace;
}
.status div {
    border: 1px solid;
    border-color: #848284 #fff transparent #848284;
}
.main-pane {
    flex: 1;
}
.pane {
    width: 22px;
}
.zone {
    display: flex;
    align-items: center;
    gap: 4px;
    width: 158px;
    padding-left: 2px;
}
.zone svg {
    width: 14px;
    height: 14px;
}
```
